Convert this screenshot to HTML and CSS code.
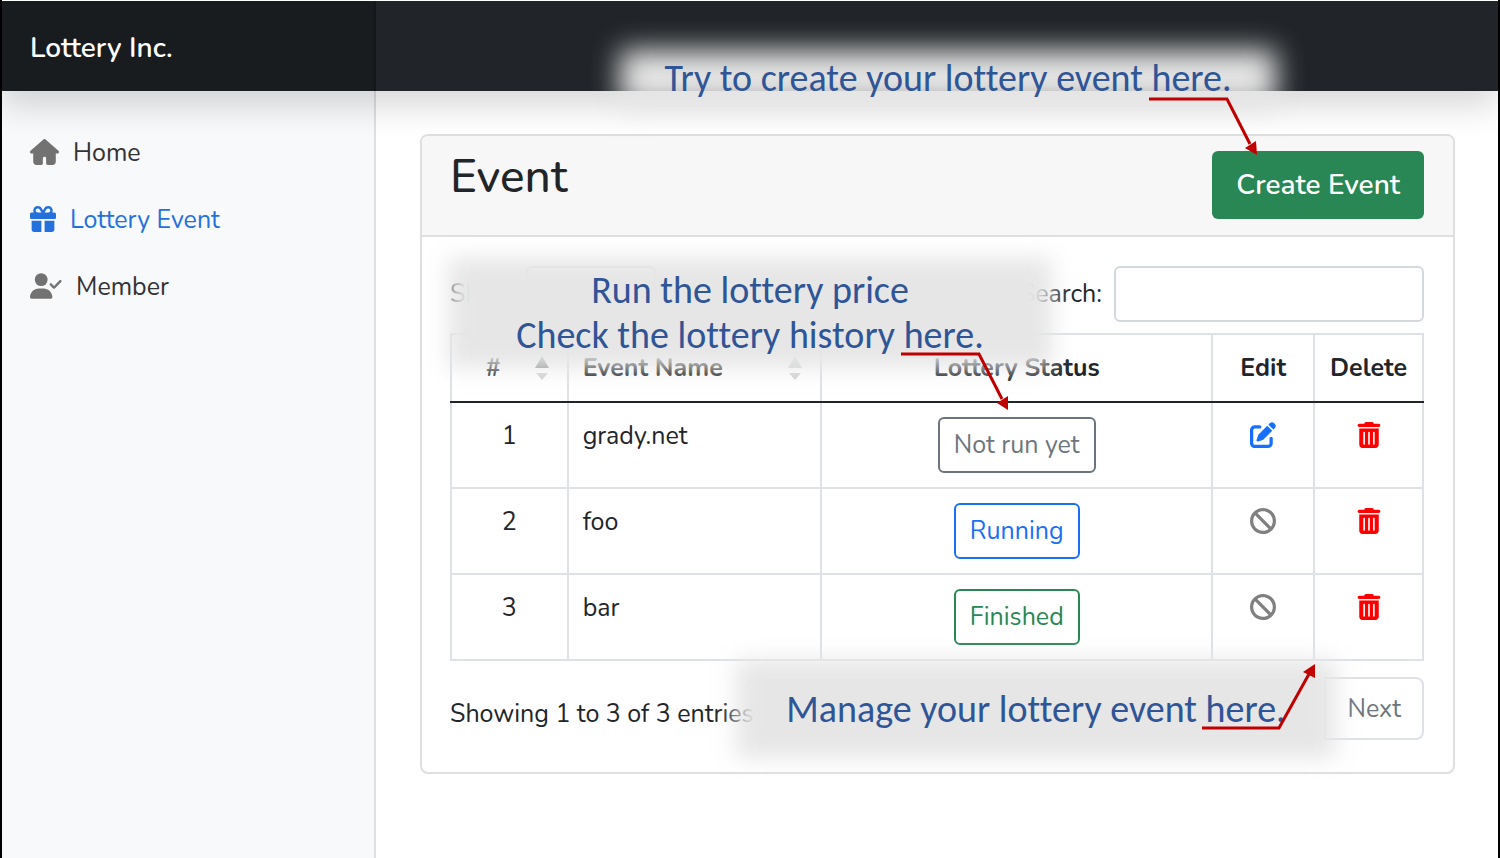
FILE: index.html
```html
<!DOCTYPE html>
<html lang="en">
<head>
<meta charset="utf-8">
<meta name="viewport" content="width=device-width, initial-scale=1">
<title>Lottery Inc. - Event</title>
<link rel="stylesheet" href="styles.css">
</head>
<body>
<svg class="sprite" aria-hidden="true">
  <symbol id="house" viewBox="0 0 576 512"><path d="M575.8 255.5c0 18-15 32.100-32 32.100h-32l.7 160.200c0 35.300-28 64.200-64 64.200H352c-18 0-32-14-32-32V384c0-18-14-32-32-32s-32 14-32 32v96c0 18-14 32-32 32H128c-36 0-64-28-64-64V287.600H32c-18 0-32-14-32-32.100 0-9 3-17 10-24L266.400 8c7-7 15-8 22-8s15 2 21 7l255.400 224.500c8 7 12 15 11 24z"/></symbol>
  <symbol id="gift" viewBox="0 0 512 512"><path fill-rule="evenodd" d="M190.500 68.800 225.300 128H152c-22 0-40-18-40-40s18-40 40-40h2.200c15 0 28.800 8 36.300 20.800zM64 88c0 14.400 3.500 28 9.600 40H32c-17.700 0-32 14.300-32 32v64c0 17.700 14.300 32 32 32h448c17.700 0 32-14.300 32-32v-64c0-17.700-14.300-32-32-32h-41.600c6.100-12 9.600-25.600 9.600-40 0-48.600-39.400-88-88-88h-2.200c-32 0-61.500 16.900-77.700 44.400L256 85.500l-24.100-41C215.700 16.900 186.100 0 154.200 0H152C103.400 0 64 39.400 64 88zm336 0c0 22-18 40-40 40h-73.300l34.800-59.200C329 56 342.800 48 357.800 48h2.200c22 0 40 18 40 40zM32 288v176c0 26.500 21.500 48 48 48h144V288H32zm256 224h144c26.500 0 48-21.500 48-48V288H288v224z"/></symbol>
  <symbol id="user-check" viewBox="0 0 640 512"><circle cx="224" cy="128" r="128"/><path d="M0 482.300C0 383.800 79.800 304 178.300 304h91.400C368.200 304 448 383.800 448 482.300c0 16.400-13.300 29.700-29.700 29.700H29.700C13.300 512 0 498.700 0 482.300zM625 177 497 305c-9.400 9.400-24.600 9.400-33.900 0l-64-64c-9.400-9.400-9.400-24.600 0-33.900s24.600-9.400 33.900 0l47 47L591 143c9.400-9.400 24.600-9.400 33.900 0s9.400 24.600 0 34z"/></symbol>
  <symbol id="pen-square" viewBox="0 0 512 512"><path d="M471.600 21.700c-21.900-21.900-57.300-21.900-79.200 0l-30.100 30 97.900 97.900 30.100-30.100c21.900-21.900 21.900-57.300 0-79.200zM172.400 241.700c-6.100 6.100-10.800 13.600-13.500 21.900l-29.600 88.800c-2.900 8.600-.6 18.100 5.800 24.600s15.900 8.700 24.600 5.800l88.800-29.600c8.200-2.700 15.700-7.400 21.900-13.500l167.300-167.400-98-98zM96 64c-53 0-96 43-96 96v256c0 53 43 96 96 96h256c53 0 96-43 96-96v-96c0-17.700-14.300-32-32-32s-32 14.300-32 32v96c0 17.700-14.300 32-32 32H96c-17.700 0-32-14.300-32-32V160c0-17.700 14.300-32 32-32h96c17.700 0 32-14.300 32-32s-14.300-32-32-32z"/></symbol>
  <symbol id="ban" viewBox="0 0 512 512"><path fill-rule="evenodd" d="M367.200 412.500 99.500 144.800C77.100 176.100 64 214.500 64 256c0 106 86 192 192 192 41.500 0 79.900-13.100 111.200-35.500zm45.300-45.300C434.900 335.900 448 297.500 448 256c0-106-86-192-192-192-41.500 0-79.900 13.100-111.200 35.500zM512 256a256 256 0 1 1-512 0 256 256 0 1 1 512 0z"/></symbol>
  <symbol id="trash" viewBox="0 0 448 512"><path fill-rule="evenodd" d="M135.200 17.700C140.600 6.800 151.700 0 163.800 0h120.400c12.100 0 23.200 6.800 28.600 17.700L320 32h96c17.700 0 32 14.300 32 32s-14.300 32-32 32H32C14.300 96 0 81.700 0 64s14.300-32 32-32h96zM32 128h384v320c0 35.300-28.700 64-64 64H96c-35.300 0-64-28.700-64-64zm96 64c-8.800 0-16 7.200-16 16v224c0 8.800 7.200 16 16 16s16-7.200 16-16V208c0-8.800-7.200-16-16-16zm96 0c-8.800 0-16 7.200-16 16v224c0 8.800 7.200 16 16 16s16-7.200 16-16V208c0-8.800-7.200-16-16-16zm96 0c-8.800 0-16 7.200-16 16v224c0 8.800 7.200 16 16 16s16-7.200 16-16V208c0-8.800-7.200-16-16-16z"/></symbol>
</svg>

<div class="page">
  <header class="topbar">
    <a class="brand" href="#">Lottery Inc.</a>
  </header>

  <div class="layout">
    <nav class="sidebar" aria-label="Main">
      <a class="nav-link" href="#"><svg class="icon icon-wide"><use href="#house"/></svg>Home</a>
      <a class="nav-link active" href="#" aria-current="page"><svg class="icon"><use href="#gift"/></svg>Lottery Event</a>
      <a class="nav-link" href="#"><svg class="icon icon-wider"><use href="#user-check"/></svg>Member</a>
    </nav>

    <main class="main">
      <section class="card">
        <div class="card-header">
          <h1 class="title">Event</h1>
          <button class="btn-create" type="button">Create Event</button>
        </div>
        <div class="card-body">
          <div class="controls">
            <div class="field">
              <label for="length">Show</label>
              <select id="length" class="length"><option>10</option></select>
            </div>
            <div class="field">
              <label for="search">Search:</label>
              <input id="search" class="search" type="search">
            </div>
          </div>

          <table class="events">
            <colgroup><col class="c-num"><col class="c-name"><col class="c-status"><col class="c-edit"><col class="c-delete"></colgroup>
            <thead>
              <tr>
                <th><div class="sortable centered"><span class="label">#</span><svg class="sort" viewBox="0 0 14 24"><path class="up" d="M7 0l7 12H0z"/><path class="down" d="M1 17h12l-6 7z"/></svg></div></th>
                <th><div class="sortable"><span class="label">Event Name</span><svg class="sort" viewBox="0 0 14 24"><path class="down" d="M7 0l7 12H0z"/><path class="down" d="M1 17h12l-6 7z"/></svg></div></th>
                <th>Lottery Status</th>
                <th>Edit</th>
                <th>Delete</th>
              </tr>
            </thead>
            <tbody>
              <tr>
                <td class="mid">1</td><td>grady.net</td>
                <td class="mid"><button class="status idle" type="button">Not run yet</button></td>
                <td class="mid"><button class="act edit" type="button" aria-label="Edit grady.net"><svg class="icon"><use href="#pen-square"/></svg></button></td>
                <td class="mid"><button class="act delete" type="button" aria-label="Delete grady.net"><svg class="icon"><use href="#trash"/></svg></button></td>
              </tr>
              <tr>
                <td class="mid">2</td><td>foo</td>
                <td class="mid"><button class="status running" type="button">Running</button></td>
                <td class="mid"><button class="act" type="button" disabled aria-label="Edit foo"><svg class="icon"><use href="#ban"/></svg></button></td>
                <td class="mid"><button class="act delete" type="button" aria-label="Delete foo"><svg class="icon"><use href="#trash"/></svg></button></td>
              </tr>
              <tr>
                <td class="mid">3</td><td>bar</td>
                <td class="mid"><button class="status finished" type="button">Finished</button></td>
                <td class="mid"><button class="act" type="button" disabled aria-label="Edit bar"><svg class="icon"><use href="#ban"/></svg></button></td>
                <td class="mid"><button class="act delete" type="button" aria-label="Delete bar"><svg class="icon"><use href="#trash"/></svg></button></td>
              </tr>
            </tbody>
          </table>

          <div class="footer">
            <p class="info">Showing 1 to 3 of 3 entries</p>
            <button class="next" type="button" disabled>Next</button>
          </div>
        </div>
      </section>
    </main>
  </div>

  <div class="callout callout-create">
    <p>Try to create your lottery event here.</p>
  </div>
  <div class="callout callout-run">
    <p>Run the lottery price</p>
    <p>Check the lottery history here.</p>
  </div>
  <div class="callout callout-manage">
    <p>Manage your lottery event here.</p>
  </div>
  <svg class="arrow arrow-create" viewBox="0 0 112 60"><path class="line" d="M3 3h78l23 45"/><path class="head" d="M111 59L99 52l11-7z"/></svg>
  <svg class="arrow arrow-run" viewBox="0 0 112 60"><path class="line" d="M3 3h78l23 45"/><path class="head" d="M110 59L99 52l11-7z"/></svg>
  <svg class="arrow arrow-manage" viewBox="0 0 116 68"><path class="line" d="M3 65h77l30-54"/><path class="head" d="M116 1v14l-12-6z"/></svg>
</div>
</body>
</html>
```
FILE: styles.css
```css
* { box-sizing: border-box; }

body {
  margin: 0;
  background: #fff;
  color: #212529;
  font: 25px/38px Nunito, Lato, "Open Sans", sans-serif;
}

p, h1 { margin: 0; }
button, input, select { font: inherit; color: inherit; }
button { cursor: pointer; }

.sprite { position: absolute; width: 0; height: 0; }

.icon { width: 26px; height: 26px; fill: currentColor; flex: none; }
.icon-wide { width: 29px; }
.icon-wider { width: 32px; }

.page {
  position: relative;
  display: flex;
  flex-direction: column;
  min-height: 100vh;
  border: solid #000;
  border-width: 0 2px;
  overflow: hidden;
}

.topbar {
  position: relative;
  display: flex;
  height: 91px;
  border-top: 1px solid #fff;
  background: #212529;
  box-shadow: 0 16px 32px rgba(0, 0, 0, .15);
}

.brand {
  display: flex;
  align-items: center;
  width: 25%;
  padding: 4px 28px 0;
  background: #191c1f;
  box-shadow: inset -2px 0 0 #14171a;
  color: #fff;
  font-size: 28px;
  font-weight: 600;
  text-decoration: none;
}

.layout { display: flex; flex: 1; }

.sidebar {
  display: flex;
  flex-direction: column;
  width: 25%;
  padding-top: 29px;
  background: #f8f9fb;
  border-right: 2px solid #dedfe0;
}

.nav-link {
  display: flex;
  align-items: center;
  gap: 14px;
  padding: 14px 28px;
  line-height: 39px;
  color: #333;
  text-decoration: none;
}
.nav-link .icon { margin-bottom: 4px; color: #727272; }
.nav-link.active, .nav-link.active .icon { color: #2470dc; }

.main { flex: 1; min-width: 0; padding: 43px 43px 44px 44px; }

.card { border: 2px solid #dfdfdf; border-radius: 8px; background: #fff; }

.card-header {
  display: flex;
  justify-content: space-between;
  align-items: flex-start;
  padding: 15px 29px 16px 28px;
  background: #f7f7f7;
  border-bottom: 2px solid #dfdfdf;
  border-radius: 6px 6px 0 0;
}

.title { font-size: 46px; font-weight: 500; line-height: 52px; }

.btn-create {
  height: 68px;
  padding: 0 24px;
  border: 0;
  border-radius: 6px;
  background: #288754;
  color: #fff;
  font-size: 28px;
  font-weight: 600;
}

.card-body { padding: 29px 29px 32px 28px; }

.controls {
  display: flex;
  justify-content: space-between;
  margin-bottom: 11px;
}
.field { display: flex; align-items: center; gap: 12px; }

.length, .search {
  height: 56px;
  border: 2px solid #d3d8dd;
  border-radius: 6px;
  background: #fff;
}
.length { width: 130px; padding: 0 14px; }
.search { width: 310px; padding: 0 14px; }

.events {
  width: 100%;
  table-layout: fixed;
  border-collapse: collapse;
}
.c-num { width: 12%; }
.c-name { width: 26.1%; }
.c-status { width: 40.2%; }
.c-edit { width: 10.5%; }
.c-delete { width: 11.2%; }

.events th, .events td {
  padding: 14px;
  border: 2px solid #dee2e6;
  text-align: left;
  vertical-align: top;
}
.events th { text-align: center; border-bottom-color: #212529; }
.events td.mid { text-align: center; }

.sortable { display: flex; align-items: center; justify-content: space-between; padding-right: 4px; }
.sortable.centered .label { flex: 1; padding-right: 14px; }
.sort { width: 14px; height: 24px; flex: none; }
.sort .up { fill: #8a8c8f; }
.sort .down { fill: #d3d4d5; }

.status {
  display: block;
  height: 56px;
  margin: 0 auto;
  padding: 0 14px;
  border: 2px solid currentColor;
  border-radius: 6px;
  background: #fff;
}
.idle { color: #6c757d; }
.running { color: #1a6ff5; }
.finished { color: #288754; }

.act {
  display: inline-flex;
  align-items: center;
  height: 36px;
  padding: 0;
  border: 0;
  background: none;
  color: #808080;
}
.act.edit { color: #1570ff; }
.act.delete { color: #f00; }

.footer {
  display: flex;
  justify-content: space-between;
  align-items: center;
  padding-top: 16px;
}
.info { padding-top: 10px; }
.next {
  height: 63px;
  padding: 0 21px;
  border: 2px solid #dee2e6;
  border-radius: 0 8px 8px 0;
  background: #fff;
  color: #6c757d;
}

/* Annotations drawn over the screen */
.callout {
  position: absolute;
  display: flex;
  flex-direction: column;
  align-items: center;
  justify-content: center;
  color: #2f5597;
  font: 38px/45px Carlito, Lato, sans-serif;
  font-variant-ligatures: none;
  white-space: nowrap;
}
.callout::before {
  content: "";
  position: absolute;
  inset: 0;
  background: #e6e6e6;
  filter: blur(11px);
}
.callout p { position: relative; }
.callout-create { left: 618px; top: 50px; width: 656px; height: 56px; }
.callout-create::before { filter: blur(14px); }
.callout-run { left: 446px; top: 258px; width: 604px; height: 110px; }
.callout-manage { left: 734px; top: 660px; width: 600px; height: 98px; }

.arrow { position: absolute; }
.arrow .line { fill: none; stroke: #c00000; stroke-width: 3; }
.arrow .head { fill: #c00000; }
.arrow-create { left: 1144px; top: 96px; width: 112px; height: 60px; }
.arrow-run { left: 896px; top: 351px; width: 112px; height: 60px; }
.arrow-manage { left: 1197px; top: 663px; width: 116px; height: 68px; }
```
